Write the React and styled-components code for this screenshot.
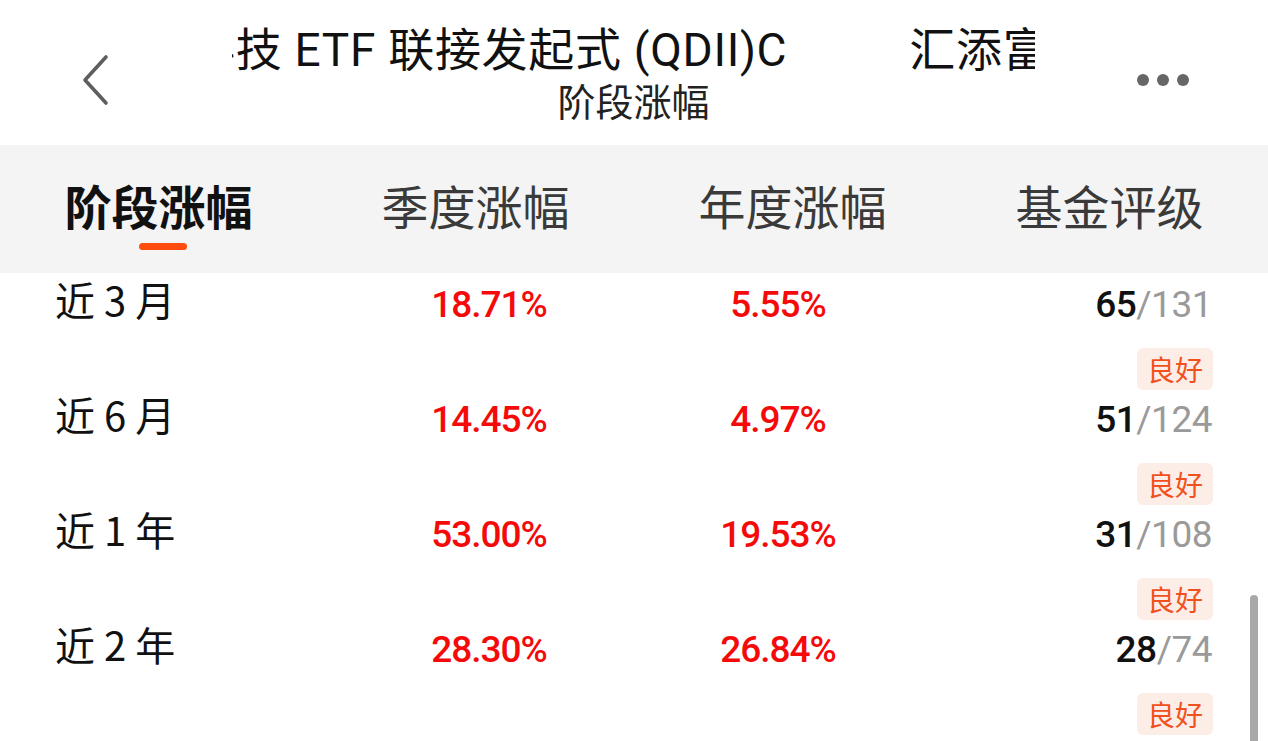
import React from 'react';
import styled, { createGlobalStyle } from 'styled-components';

const GlobalStyle = createGlobalStyle`
  html, body {
    margin: 0;
    padding: 0;
    background: #fff;
    overflow: hidden;
  }
  body {
    font-family: "Noto Sans CJK SC", "Noto Sans", sans-serif;
    color: #111;
  }
`;

const Page = styled.div`
  position: relative;
  width: 1268px;
  height: 741px;
  overflow: hidden;
  background: #fff;
`;

const Header = styled.header`
  display: grid;
  grid-template-columns: 232px 803px 233px;
  height: 145px;
  background: #fff;
`;

const BackButton = styled.button`
  display: flex;
  align-items: center;
  align-self: start;
  margin: 52px 0 0 80px;
  padding: 0;
  width: 40px;
  height: 56px;
  border: none;
  background: none;
`;

const TitleBlock = styled.div`
  display: flex;
  flex-direction: column;
  align-items: center;
  padding-top: 19px;
`;

const Marquee = styled.div`
  width: 100%;
  overflow: hidden;
  white-space: pre;
`;

const Track = styled.div`
  display: flex;
  gap: ${(p) => p.$gap}px;
  transform: translateX(${(p) => -p.$offset}px);
  font-family: "Roboto", "Noto Sans CJK SC", sans-serif;
  font-size: 46px;
  letter-spacing: 0.7px;
  line-height: 62px;
  color: #111;
`;

const Subtitle = styled.div`
  font-size: 38px;
  line-height: 46px;
  color: #222;
  margin-top: -4px;
`;

const MoreButton = styled.button`
  display: flex;
  gap: 8px;
  align-self: start;
  margin: 74px 0 0 102px;
  padding: 0;
  border: none;
  background: none;
`;

const Dot = styled.span`
  width: 12px;
  height: 12px;
  border-radius: 50%;
  background: #666;
`;

const Tabs = styled.nav`
  display: grid;
  grid-template-columns: repeat(4, 1fr);
  height: 128px;
  background: #f4f4f4;
`;

const Tab = styled.div`
  display: flex;
  flex-direction: column;
  align-items: center;
  padding-top: 28px;
  font-size: 47px;
  line-height: 64px;
  font-weight: ${(p) => (p.$active ? 700 : 400)};
  color: ${(p) => (p.$active ? '#111' : '#3a3a3a')};
`;

const Underline = styled.span`
  width: 48px;
  height: 7px;
  margin-top: 6px;
  margin-left: 8px;
  border-radius: 4px;
  background: #ff4d0f;
  visibility: ${(p) => (p.$active ? 'visible' : 'hidden')};
`;

const List = styled.div`
  display: flex;
  flex-direction: column;
`;

const Row = styled.div`
  display: grid;
  grid-template-columns: 300px 268px 310px 1fr;
  height: 115px;
  padding: 2px 56px 0 55px;
  box-sizing: border-box;
`;

const Label = styled.div`
  font-size: 40px;
  letter-spacing: 9px;
  line-height: 60px;
  color: #111;
  margin-top: -6px;
`;

const Value = styled.div`
  text-align: center;
  font-family: "Roboto", sans-serif;
  font-weight: 500;
  font-size: 37px;
  letter-spacing: -1px;
  line-height: 60px;
  color: #f50a0a;
`;

const Rating = styled.div`
  display: flex;
  flex-direction: column;
  align-items: flex-end;
  gap: 13px;
`;

const Score = styled.div`
  font-family: "Roboto", sans-serif;
  font-size: 37px;
  letter-spacing: -0.5px;
  line-height: 60px;
`;

const Rank = styled.span`
  font-weight: 500;
  color: #111;
`;

const Total = styled.span`
  color: #9a9a9a;
`;

const Badge = styled.span`
  display: flex;
  align-items: center;
  height: 42px;
  padding: 0 10px;
  border-radius: 6px;
  background: #fdede7;
  color: #f1511c;
  font-size: 28px;
  margin-right: -1px;
`;

const Scrollbar = styled.div`
  position: absolute;
  right: 10px;
  top: 595px;
  width: 8px;
  height: 170px;
  border-radius: 4px;
  background: #a8a8a8;
`;

const rows = [
  { label: '近3月', q: '18.71%', y: '5.55%', rank: '65', total: '131', level: '良好' },
  { label: '近6月', q: '14.45%', y: '4.97%', rank: '51', total: '124', level: '良好' },
  { label: '近1年', q: '53.00%', y: '19.53%', rank: '31', total: '108', level: '良好' },
  { label: '近2年', q: '28.30%', y: '26.84%', rank: '28', total: '74', level: '良好' },
  { label: '近3年', q: '--', y: '--', rank: '--', total: '--', level: '良好' },
];

const tabs = ['阶段涨幅', '季度涨幅', '年度涨幅', '基金评级'];

const fundName = '汇添富恒生科技 ETF 联接发起式 (QDII)C';
const visibleHead = '科技 ETF 联接发起式 (QDII)C';

export default function App() {
  return (
    <Page>
      <GlobalStyle />
      <Header>
        <BackButton aria-label="返回">
          <svg width="30" height="52" viewBox="0 0 30 52">
            <path d="M26 3 L5 26 L26 49" fill="none" stroke="#5e5e5e" strokeWidth="3.6" strokeLinecap="round" strokeLinejoin="round" />
          </svg>
        </BackButton>
        <TitleBlock>
          <Marquee>
            <Track $gap={122} $offset={43}>
              <span>{visibleHead}</span>
              <span>{fundName}</span>
            </Track>
          </Marquee>
          <Subtitle>阶段涨幅</Subtitle>
        </TitleBlock>
        <MoreButton aria-label="更多">
          <Dot />
          <Dot />
          <Dot />
        </MoreButton>
      </Header>

      <Tabs>
        {tabs.map((t, i) => (
          <Tab key={t} $active={i === 0}>
            {t}
            <Underline $active={i === 0} />
          </Tab>
        ))}
      </Tabs>

      <List>
        {rows.map((r) => (
          <Row key={r.label}>
            <Label>{r.label}</Label>
            <Value>{r.q}</Value>
            <Value>{r.y}</Value>
            <Rating>
              <Score>
                <Rank>{r.rank}</Rank>
                <Total>/{r.total}</Total>
              </Score>
              <Badge>{r.level}</Badge>
            </Rating>
          </Row>
        ))}
      </List>

      <Scrollbar />
    </Page>
  );
}
